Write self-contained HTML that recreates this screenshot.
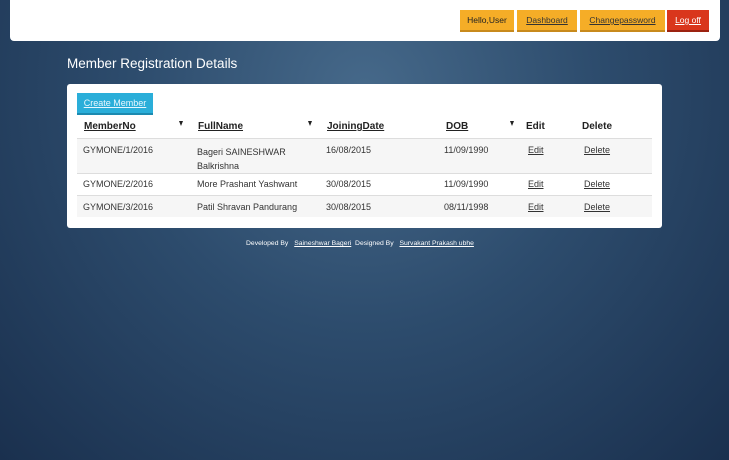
<!DOCTYPE html>
<html><head><meta charset="utf-8"><style>
*{margin:0;padding:0;box-sizing:border-box}
body{width:729px;height:460px;overflow:hidden;font-family:"Liberation Sans",sans-serif;
background:radial-gradient(ellipse at 50% 20%,#46698a 0%,#2d4c6d 45%,#1a304e 100%);position:relative}
.top{position:absolute;left:10px;top:0;width:710px;height:41px;background:#fff;border-radius:0 0 4px 4px}
.btn{position:absolute;top:10px;height:22px;font-size:8.5px;line-height:21px;text-align:center;color:#222;background:#f5ad27;border-bottom:2px solid #c88a1c}
.btn u{color:#333}
h1{position:absolute;left:67px;top:56px;color:#fff;font-size:13.5px;font-weight:normal}
.card{position:absolute;left:67px;top:84px;width:595px;height:144px;background:#fff;border-radius:3px}
.cm{position:absolute;left:10px;top:9px;width:76px;height:22px;background:#2aaed9;border-bottom:2px solid #1c8ab0;color:#e8f7ff;font-size:9px;line-height:20px;text-align:center;text-decoration:underline}
.t{position:absolute;font-size:9px;color:#333}
.h{position:absolute;top:37px;font-size:10px;font-weight:bold;color:#222}
.tri{position:absolute;top:37px;width:0;height:0;border-left:2.5px solid transparent;border-right:2.5px solid transparent;border-top:5px solid #222}
.row{position:absolute;left:10px;width:575px;background:#f6f6f6;border-top:1px solid #ddd}
.foot{position:absolute;top:240px;left:246px;font-size:6.8px;color:#fff}
.foot u{margin-left:4px}
</style></head><body>
<div class="top">
<div class="btn" style="left:450px;width:54px">Hello,User</div>
<div class="btn" style="left:507px;width:60px"><u>Dashboard</u></div>
<div class="btn" style="left:570px;width:85px"><u>Changepassword</u></div>
<div class="btn" style="left:657px;width:42px;background:#d9361c;border-bottom-color:#9c2210;color:#fff"><u style="color:#fff">Log off</u></div>
</div>
<h1>Member Registration Details</h1>
<div class="card">
<div class="cm">Create Member</div>
<div class="h" style="left:17px"><u>MemberNo</u></div><div class="tri" style="left:112px"></div>
<div class="h" style="left:131px"><u>FullName</u></div><div class="tri" style="left:241px"></div>
<div class="h" style="left:260px"><u>JoiningDate</u></div>
<div class="h" style="left:379px"><u>DOB</u></div><div class="tri" style="left:443px"></div>
<div class="h" style="left:459px">Edit</div>
<div class="h" style="left:515px">Delete</div>
<div class="row" style="top:54px;height:35px"></div>
<div class="row" style="top:89px;height:22px;background:#fff"></div>
<div class="row" style="top:111px;height:22px"></div>
<div class="t" style="left:16px;top:61px">GYMONE/1/2016</div>
<div class="t" style="left:130px;top:61px;line-height:14px">Bageri SAINESHWAR<br>Balkrishna</div>
<div class="t" style="left:259px;top:61px">16/08/2015</div>
<div class="t" style="left:377px;top:61px">11/09/1990</div>
<div class="t" style="left:461px;top:61px"><u>Edit</u></div>
<div class="t" style="left:517px;top:61px"><u>Delete</u></div>
<div class="t" style="left:16px;top:95px">GYMONE/2/2016</div>
<div class="t" style="left:130px;top:95px">More Prashant Yashwant</div>
<div class="t" style="left:259px;top:95px">30/08/2015</div>
<div class="t" style="left:377px;top:95px">11/09/1990</div>
<div class="t" style="left:461px;top:95px"><u>Edit</u></div>
<div class="t" style="left:517px;top:95px"><u>Delete</u></div>
<div class="t" style="left:16px;top:118px">GYMONE/3/2016</div>
<div class="t" style="left:130px;top:118px">Patil Shravan Pandurang</div>
<div class="t" style="left:259px;top:118px">30/08/2015</div>
<div class="t" style="left:377px;top:118px">08/11/1998</div>
<div class="t" style="left:461px;top:118px"><u>Edit</u></div>
<div class="t" style="left:517px;top:118px"><u>Delete</u></div>
</div>
<div class="foot">Developed By <u>Saineshwar Bageri</u> &nbsp;Designed By <u>Survakant Prakash ubhe</u></div>
</body></html>
